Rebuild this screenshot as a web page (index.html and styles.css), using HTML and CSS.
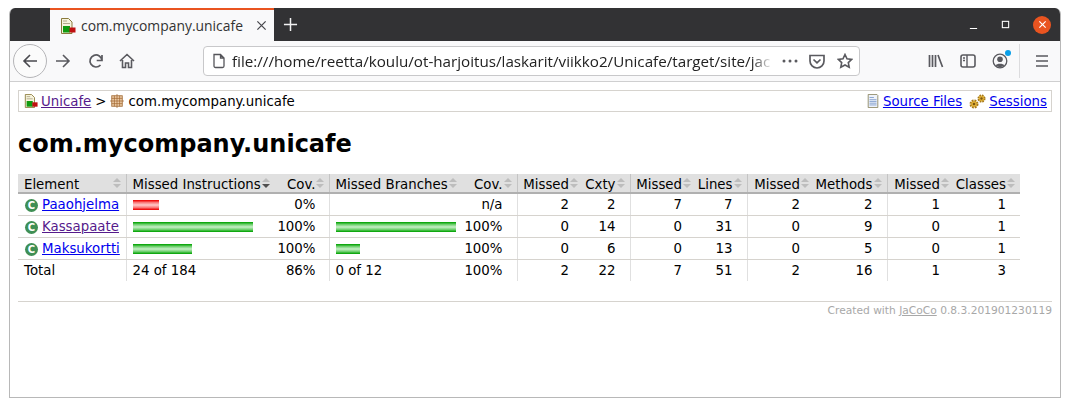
FILE: index.html
```html
<!DOCTYPE html>
<html lang="en">

<head>
    <meta charset="UTF-8">
    <title>com.mycompany.unicafe</title>
    <link rel="stylesheet" href="styles.css">
</head>

<body>
    <svg class="defs" width="0" height="0">
        <defs>
            <symbol id="report-icon" viewBox="0 0 16 16">
                <path d="M1.500 .5h7l3.500 3.500v11.500h-10.500z" fill="#f7f3dc" stroke="#8a7a3c"/>
                <path d="M3 3h4M3 5.500h7" stroke="#b0a98a"/>
                <rect x="3" y="8" width="7" height="6.500" fill="#109b10"/>
                <rect x="9.500" y="9.500" width="6" height="5" fill="#c01010"/>
            </symbol>
            <symbol id="gear-icon" viewBox="0 0 10 10">
                <circle cx="5" cy="5" r="3.300" fill="#e3b338" stroke="#a87a18" stroke-width="2.400" stroke-dasharray="1.700 .9"/>
                <circle cx="5" cy="5" r="2.700" fill="#e3b338"/>
                <circle cx="5" cy="5" r="1.300" fill="#7a5410"/>
            </symbol>
        </defs>
    </svg>

    <div class="window">
        <div class="tabbar">
            <div class="tab">
                <svg class="ico16"><use href="#report-icon"/></svg>
                <span class="tab-title">com.mycompany.unicafe</span>
                <svg class="tab-close" viewBox="0 0 12 12"><path d="M1.500 1.500l9 9M10.500 1.500l-9 9" stroke="#4a4a4f" stroke-width="1.400"/></svg>
            </div>
            <svg class="new-tab" viewBox="0 0 16 16"><path d="M8 1v14M1 8h14" stroke="#f2f2f2" stroke-width="1.600"/></svg>
            <div class="win-controls">
                <svg class="win-btn" viewBox="0 0 10 10"><path d="M1 9.500h8" stroke="#fff" stroke-width="1.200"/></svg>
                <svg class="win-btn" viewBox="0 0 10 10"><rect x="1.500" y="1.500" width="7" height="7" fill="none" stroke="#fff" stroke-width="1.200"/></svg>
                <div class="win-close"><svg viewBox="0 0 10 10"><path d="M1.500 1.500l7 7M8.500 1.500l-7 7" stroke="#fff" stroke-width="1.300"/></svg></div>
            </div>
        </div>

        <div class="toolbar">
            <div class="back-btn">
                <svg class="tool-ico" viewBox="0 0 16 16"><path d="M15 8H2M8 2L2 8l6 6" fill="none" stroke="#4a4a4f" stroke-width="1.600"/></svg>
            </div>
            <svg class="tool-ico fwd" viewBox="0 0 16 16"><path d="M1 8h13M8 2l6 6-6 6" fill="none" stroke="#5a5a5f" stroke-width="1.600"/></svg>
            <svg class="tool-ico reload" viewBox="0 0 16 16"><path d="M14 7.500A6 6 0 1 0 12.500 12M14 2v5.500H8.700" fill="none" stroke="#5a5a5f" stroke-width="1.700"/></svg>
            <svg class="tool-ico home" viewBox="0 0 16 16"><path d="M1 8l7-6.500L15 8M3.500 7v7.500h3V10h3v4.500h3V7" fill="none" stroke="#5a5a5f" stroke-width="1.600"/></svg>

            <div class="urlbar">
                <svg class="url-page" viewBox="0 0 16 16"><path d="M3 1.500h6.500l3.500 3.500v8a1.500 1.500 0 0 1-1.500 1.500h-7A1.500 1.500 0 0 1 3 13zM9.500 1.500V5H13" fill="none" stroke="#55555a" stroke-width="1.300"/></svg>
                <span class="url-text">file:///home/reetta/koulu/ot-harjoitus/laskarit/viikko2/Unicafe/target/site/jac</span>
                <svg class="url-dots" viewBox="0 0 16 4"><circle cx="2" cy="2" r="1.500" fill="#5a5a5f"/><circle cx="8" cy="2" r="1.500" fill="#5a5a5f"/><circle cx="14" cy="2" r="1.500" fill="#5a5a5f"/></svg>
                <svg class="tool-ico pocket" viewBox="0 0 16 16"><path d="M1 2.500h14V8a7 7 0 0 1-14 0zM4.500 6.500L8 9.800l3.500-3.300" fill="none" stroke="#5a5a5f" stroke-width="1.700"/></svg>
                <svg class="tool-ico star" viewBox="0 0 16 16"><path d="M8 1.500l2 4.300 4.700.6-3.400 3.200.9 4.700L8 12l-4.200 2.300.9-4.700L1.300 6.400 6 5.800z" fill="none" stroke="#5a5a5f" stroke-width="1.600"/></svg>
            </div>

            <div class="tool-right">
                <svg class="tool-ico" viewBox="0 0 16 16"><path d="M1.500 2v12M4.500 2v12M7.500 2v12M10 2l4.500 12" fill="none" stroke="#5a5a5f" stroke-width="1.700"/></svg>
                <svg class="tool-ico" viewBox="0 0 16 16"><rect x="1" y="2" width="14" height="12" rx="2" fill="none" stroke="#5a5a5f" stroke-width="1.600"/><path d="M7 2v12M3 5h2M3 7.500h2" stroke="#5a5a5f" stroke-width="1.400"/></svg>
                <div class="account">
                    <svg class="tool-ico" viewBox="0 0 16 16"><circle cx="8" cy="8" r="6.800" fill="none" stroke="#5a5a5f" stroke-width="1.300"/><circle cx="8" cy="6.300" r="2.800" fill="#5a5a5f"/><path d="M3.500 12.500c1-2.500 8-2.500 9 0L8 14.500z" fill="#5a5a5f"/></svg>
                    <span class="account-dot"></span>
                </div>
                <span class="tool-sep"></span>
                <svg class="tool-ico menu" viewBox="0 0 16 16"><path d="M2 3h12M2 8h12M2 13h12" stroke="#5a5a5f" stroke-width="1.700"/></svg>
            </div>
        </div>

        <div class="page">
            <div class="breadcrumb">
                <div class="crumbs">
                    <svg class="ico14"><use href="#report-icon"/></svg>
                    <a class="visited" href="#">Unicafe</a>
                    <span class="crumb-sep">&gt;</span>
                    <svg class="ico14" viewBox="0 0 16 16">
                        <rect x="2" y="2" width="12" height="12" fill="#eccba6" stroke="#a5703c"/>
                        <path d="M8 0v16M0 8h16M5 2v12M11 2v12M2 5h12M2 11h12" stroke="#a0652e" stroke-width=".8"/>
                    </svg>
                    <span>com.mycompany.unicafe</span>
                </div>
                <div class="crumb-links">
                    <svg class="ico14" viewBox="0 0 16 16">
                        <path d="M2.500 .5h10l1 1v14h-11z" fill="#eef2fa" stroke="#8a8560"/>
                        <path d="M4 4h5M4 6.500h8M4 8.500h8M4 10.500h8M4 12.500h8" stroke="#7f9ccb"/>
                    </svg>
                    <a href="#">Source Files</a>
                    <span class="gears">
                        <svg class="gear-big"><use href="#gear-icon"/></svg>
                        <svg class="gear-small"><use href="#gear-icon"/></svg>
                    </span>
                    <a href="#">Sessions</a>
                </div>
            </div>

            <h1>com.mycompany.unicafe</h1>

            <table class="coverage">
                <colgroup>
                    <col class="w108"><col class="w149"><col class="w54"><col class="w133"><col class="w55">
                    <col class="w66"><col class="w47"><col class="w66"><col class="w51">
                    <col class="w67"><col class="w73"><col class="w67"><col class="w66">
                </colgroup>
                <thead>
                    <tr>
                        <th class="name">Element</th>
                        <th class="name group down">Missed Instructions</th>
                        <th>Cov.</th>
                        <th class="name group">Missed Branches</th>
                        <th>Cov.</th>
                        <th class="group">Missed</th>
                        <th>Cxty</th>
                        <th class="group">Missed</th>
                        <th>Lines</th>
                        <th class="group">Missed</th>
                        <th>Methods</th>
                        <th class="group">Missed</th>
                        <th>Classes</th>
                    </tr>
                </thead>
                <tbody>
                    <tr>
                        <td class="name"><span class="class-ico">C</span><a href="#">Paaohjelma</a></td>
                        <td class="name group"><span class="bar red" style="width:26px"></span></td>
                        <td>0%</td>
                        <td class="name group"></td>
                        <td>n/a</td>
                        <td class="group">2</td><td>2</td>
                        <td class="group">7</td><td>7</td>
                        <td class="group">2</td><td>2</td>
                        <td class="group">1</td><td>1</td>
                    </tr>
                    <tr>
                        <td class="name"><span class="class-ico">C</span><a class="visited" href="#">Kassapaate</a></td>
                        <td class="name group"><span class="bar green" style="width:120px"></span></td>
                        <td>100%</td>
                        <td class="name group"><span class="bar green" style="width:120px"></span></td>
                        <td>100%</td>
                        <td class="group">0</td><td>14</td>
                        <td class="group">0</td><td>31</td>
                        <td class="group">0</td><td>9</td>
                        <td class="group">0</td><td>1</td>
                    </tr>
                    <tr>
                        <td class="name"><span class="class-ico">C</span><a href="#">Maksukortti</a></td>
                        <td class="name group"><span class="bar green" style="width:59px"></span></td>
                        <td>100%</td>
                        <td class="name group"><span class="bar green" style="width:24px"></span></td>
                        <td>100%</td>
                        <td class="group">0</td><td>6</td>
                        <td class="group">0</td><td>13</td>
                        <td class="group">0</td><td>5</td>
                        <td class="group">0</td><td>1</td>
                    </tr>
                </tbody>
                <tfoot>
                    <tr>
                        <td class="name">Total</td>
                        <td class="name group">24 of 184</td>
                        <td>86%</td>
                        <td class="name group">0 of 12</td>
                        <td>100%</td>
                        <td class="group">2</td><td>22</td>
                        <td class="group">7</td><td>51</td>
                        <td class="group">2</td><td>16</td>
                        <td class="group">1</td><td>3</td>
                    </tr>
                </tfoot>
            </table>

            <div class="footer">Created with <a href="#">JaCoCo</a> 0.8.3.201901230119</div>
        </div>
    </div>
</body>

</html>
```
FILE: styles.css
```css
body {
    margin: 8px 9px 0;
    background-color: #fff;
    font-family: "DejaVu Sans", sans-serif;
    font-size: 13.33px;
    color: #000;
}

.defs {
    position: absolute;
}

.window {
    height: 390px;
    box-sizing: border-box;
    border: 1px solid #b8b8b8;
    border-top: none;
    border-radius: 6px 6px 0 0;
    overflow: hidden;
}

/* browser chrome */

.tabbar {
    height: 33px;
    background-color: #323234;
    display: flex;
    align-items: center;
    padding-left: 40px;
}

.tab {
    width: 224px;
    height: 33px;
    box-sizing: border-box;
    background-color: #f9f9fa;
    border-top: 2px solid #e95420;
    display: flex;
    align-items: center;
    padding-left: 10px;
    font-family: "Open Sans", sans-serif;
    font-size: 13.9px;
    color: #333;
}

.ico16 {
    width: 16px;
    height: 16px;
    flex: none;
}

.ico14 {
    width: 14px;
    height: 14px;
    flex: none;
}

.tab-title {
    margin-left: 5px;
    white-space: nowrap;
}

.tab-close {
    width: 11px;
    height: 11px;
    margin-left: auto;
    margin-right: 7px;
}

.new-tab {
    width: 15px;
    height: 15px;
    margin-left: 9px;
}

.win-controls {
    margin-left: auto;
    display: flex;
    align-items: center;
    gap: 23px;
    padding-right: 9px;
}

.win-btn {
    width: 9px;
    height: 9px;
}

.win-close {
    width: 18px;
    height: 18px;
    border-radius: 50%;
    background-color: #e95420;
    display: flex;
    align-items: center;
    justify-content: center;
}

.win-close svg {
    width: 9px;
    height: 9px;
}

.toolbar {
    height: 41px;
    box-sizing: border-box;
    background-color: #f9f9fa;
    border-bottom: 1px solid #cfcfd0;
    display: flex;
    align-items: center;
    padding-left: 3px;
}

.tool-ico {
    width: 16px;
    height: 16px;
    flex: none;
}

.back-btn {
    width: 34px;
    height: 34px;
    box-sizing: border-box;
    border: 1px solid #b5b5b8;
    border-radius: 50%;
    background-color: #fbfbfb;
    display: flex;
    align-items: center;
    justify-content: center;
    flex: none;
}

.fwd {
    margin-left: 8px;
}

.reload {
    margin-left: 17px;
}

.home {
    margin-left: 15px;
}

.urlbar {
    width: 657px;
    height: 30px;
    box-sizing: border-box;
    margin-left: 68px;
    background-color: #fff;
    border: 1px solid #c8c8ca;
    border-radius: 4px;
    display: flex;
    align-items: center;
    padding-left: 7px;
    font-family: "Open Sans", sans-serif;
    font-size: 15.2px;
    color: #222;
}

.url-page {
    width: 16px;
    height: 16px;
    flex: none;
}

.url-text {
    width: 541px;
    margin-left: 5px;
    overflow: hidden;
    white-space: nowrap;
    -webkit-mask-image: linear-gradient(to right, #000 96%, transparent);
    mask-image: linear-gradient(to right, #000 96%, transparent);
}

.url-dots {
    width: 16px;
    height: 4px;
    margin-left: 9px;
    flex: none;
}

.pocket {
    margin-left: 11px;
}

.star {
    margin-left: 12px;
}

.tool-right {
    display: flex;
    align-items: center;
    gap: 16px;
    margin-left: 68px;
}

.account {
    display: flex;
    position: relative;
}

.account-dot {
    position: absolute;
    top: -3px;
    right: -3px;
    width: 6px;
    height: 6px;
    border-radius: 50%;
    background-color: #0a9fe8;
}

.tool-sep {
    width: 1px;
    height: 34px;
    margin-left: -5px;
    background-color: #dcdcde;
}

.menu {
    margin-left: -2px;
}

/* jacoco report */

.page {
    padding: 8px 8px 0;
}

a {
    color: #00e;
}

a.visited {
    color: #551a8b;
}

.breadcrumb {
    height: 22px;
    box-sizing: border-box;
    border: 1px solid #d6d3ce;
    display: flex;
    align-items: center;
    justify-content: space-between;
    padding: 0 4px 0 5px;
}

.crumbs,
.crumb-links {
    display: flex;
    align-items: center;
    gap: 3px;
}

.crumb-sep {
    margin: 0 1px;
}

.crumbs span:last-child {
    margin-left: 1px;
}

.gears {
    position: relative;
    width: 17px;
    height: 16px;
    margin-left: 4px;
}

.gear-big {
    position: absolute;
    left: 0;
    bottom: 0;
    width: 10px;
    height: 10px;
}

.gear-small {
    position: absolute;
    right: 0;
    top: 1px;
    width: 9px;
    height: 9px;
}

h1 {
    margin: 18px 0 16px;
    font-size: 24px;
    line-height: 28px;
    font-weight: bold;
}

.coverage {
    table-layout: fixed;
    width: 1002px;
    border-collapse: collapse;
}

.w108 { width: 108px; }
.w149 { width: 149px; }
.w54 { width: 54px; }
.w133 { width: 133px; }
.w55 { width: 55px; }
.w66 { width: 66px; }
.w47 { width: 47px; }
.w51 { width: 51px; }
.w67 { width: 67px; }
.w73 { width: 73px; }

.coverage th,
.coverage td {
    padding: 0 14px 0 0;
    text-align: right;
    white-space: nowrap;
}

.coverage th {
    height: 19px;
    box-sizing: border-box;
    padding-top: 2px;
    line-height: 15px;
    background-color: #e0e0e0;
    background-image: url("data:image/svg+xml,%3Csvg xmlns='http://www.w3.org/2000/svg' width='8' height='10'%3E%3Cpath d='M4 0l4 4H0zM4 10L0 6h8z' fill='%23bdbdbd'/%3E%3C/svg%3E");
    background-repeat: no-repeat;
    background-position: right 5px center;
    border-bottom: 2px solid #b0b0b0;
    font-weight: normal;
}

.coverage th.down {
    background-image: url("data:image/svg+xml,%3Csvg xmlns='http://www.w3.org/2000/svg' width='8' height='10'%3E%3Cpath d='M4 0l4 4H0z' fill='%23bdbdbd'/%3E%3Cpath d='M4 10L0 6h8z' fill='%23505050'/%3E%3C/svg%3E");
}

.coverage th:nth-child(3),
.coverage td:nth-child(3) {
    padding-right: 13px;
}

.coverage td {
    height: 22px;
    box-sizing: border-box;
    border-bottom: 1px solid #d6d3ce;
}

.coverage tfoot td {
    border-bottom: none;
}

.coverage .name {
    text-align: left;
    padding-left: 6px;
}

.coverage .group {
    border-left: 1px solid #e0e0e0;
}

.coverage th.group {
    border-left-color: #c4c4c4;
}

.class-ico {
    display: inline-block;
    width: 13px;
    height: 13px;
    margin: -3px 4px -3px 1px;
    border-radius: 50%;
    background-color: #3f8f54;
    color: #fff;
    font-size: 10px;
    font-weight: bold;
    line-height: 13px;
    text-align: center;
    vertical-align: 0;
}

.bar {
    display: block;
    height: 10px;
    margin-top: 1px;
}

.bar.green {
    background: linear-gradient(#10a810 6%, #6fd06f 25%, #c8efc8 50%, #6fd06f 75%, #10a810 94%);
}

.bar.red {
    background: linear-gradient(#f01010 6%, #fa7a7a 25%, #ffcccc 50%, #fa7a7a 75%, #f01010 94%);
}

.footer {
    margin-top: 20px;
    border-top: 1px solid #d6d3ce;
    padding-top: 2px;
    text-align: right;
    font-size: 10.67px;
    color: #a8a8a8;
}

.footer a {
    color: #a8a8a8;
}
```
